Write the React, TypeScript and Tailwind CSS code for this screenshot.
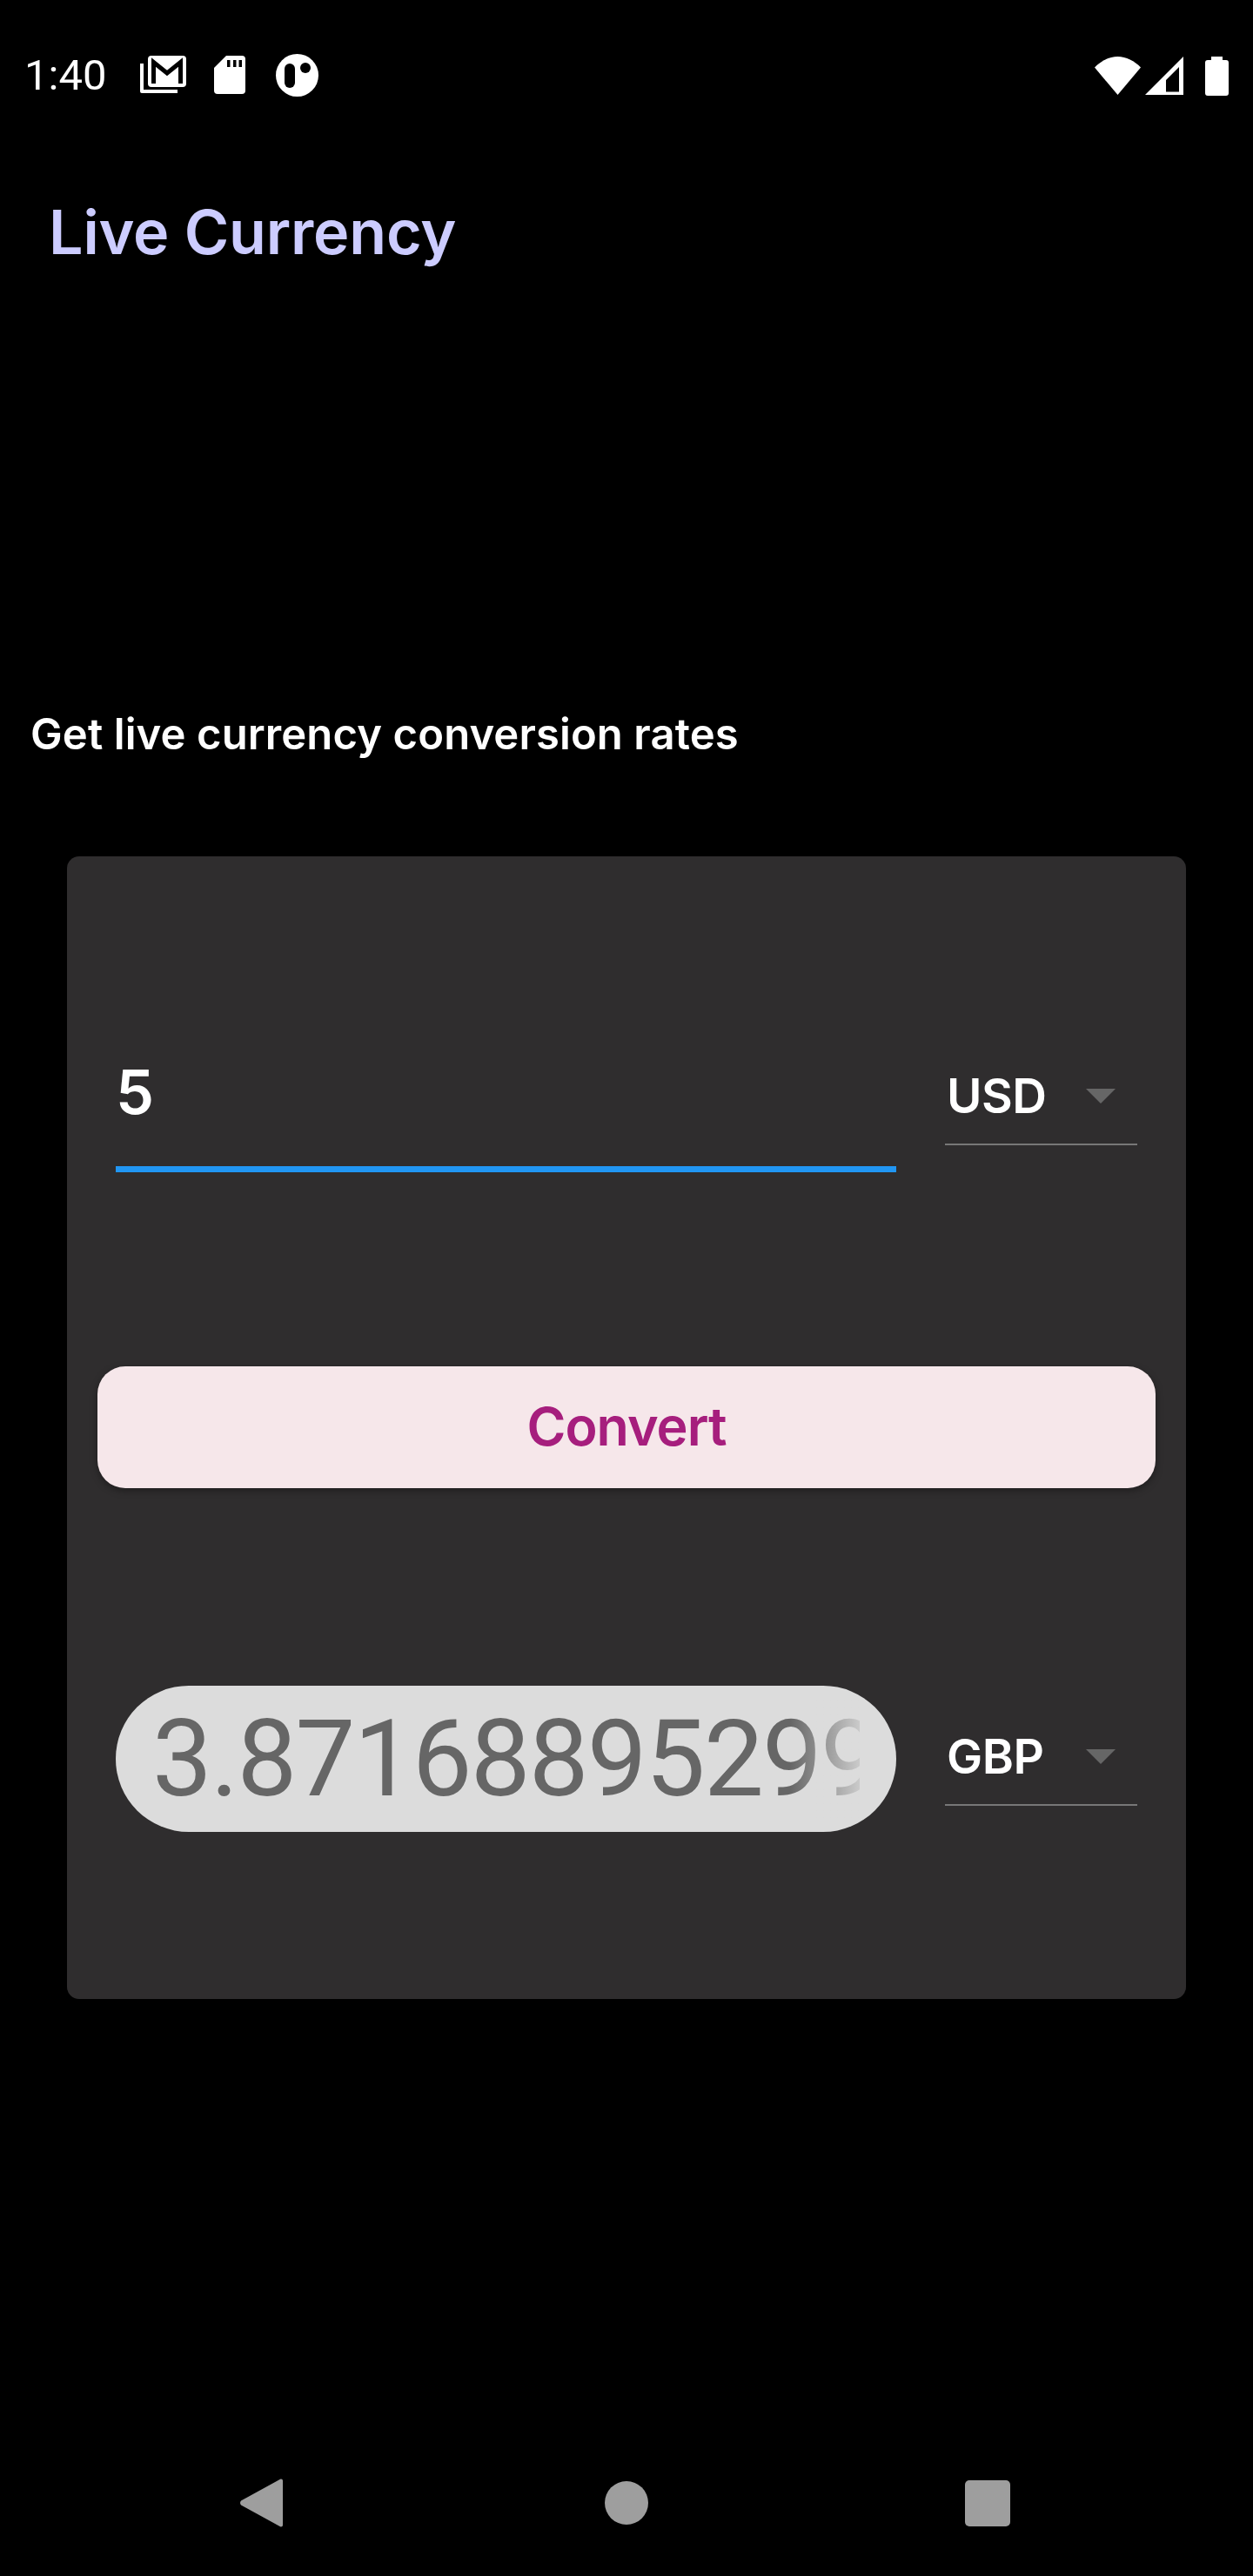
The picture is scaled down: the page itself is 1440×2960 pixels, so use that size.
export default function App() {
  const sans = "font-['Inter','Liberation_Sans',sans-serif]";
  return (
    <div className="w-[1440px] h-[2960px] bg-black flex flex-col overflow-hidden">
      <div className="h-[173px] shrink-0 flex items-center justify-between pl-[28px] pr-[28px]">
        <div className="flex items-center">
          <span className="font-['Roboto',sans-serif] text-[49px] leading-[50px] text-white w-[133px]">1:40</span>
          <svg width="205" height="50" viewBox="161 62 205 50" fill="#fff">
            <path d="M161 73h4v30h39v4h-41a2 2 0 0 1-2-2z" />
            <rect x="170" y="64" width="44" height="36" rx="4" />
            <path fill="none" stroke="#000" strokeWidth="5" d="M176.500 96V71.500L192 84l15.500-12.500V96" />
            <path d="M246 78l14-14h18a4 4 0 0 1 4 4v36a4 4 0 0 1-4 4h-28a4 4 0 0 1-4-4z" />
            <path fill="#000" d="M261 69h3.500v8h-3.500zM268 69h3.500v8h-3.500zM274.500 69h3.500v8h-3.500z" />
            <circle cx="341.500" cy="86.500" r="24.500" />
            <rect x="327" y="73" width="12" height="28" rx="6" fill="#000" />
            <circle cx="351" cy="78" r="6" fill="#000" />
          </svg>
        </div>
        <svg width="154" height="46" viewBox="1258 62 154 46" fill="#fff">
          <path d="M1258 75.500C1265 68 1275 63 1284.500 63S1304 68 1311 75.500L1284.500 107z" />
          <path clipRule="evenodd" fillRule="evenodd" d="M1316 107L1360 63V107zM1340 103.500H1355V75L1340 90z" />
          <path d="M1392 67v-4h13v4h4a3 3 0 0 1 3 3v35a3 3 0 0 1-3 3h-21a3 3 0 0 1-3-3V70a3 3 0 0 1 3-3z" />
        </svg>
      </div>
      <h1 className={`${sans} pl-[56px] text-[70px] leading-[90px] font-semibold text-[#ccccff] mt-[49px] tracking-[-0.2px]`}>Live Currency</h1>
      <p className={`${sans} pl-[35px] text-[49px] leading-[70px] font-semibold text-white mt-[497px] tracking-[0.1px]`}>Get live currency conversion rates</p>
      <div className="mt-[105px] mx-[77px] h-[1313px] bg-[#2f2d2e] rounded-[14px] flex flex-col items-stretch px-[35px]">
        <div className="mt-[226px] flex items-start gap-[56px] pl-[21px] pr-[20px]">
          <div className="w-[897px] shrink-0">
            <div className={`${sans} text-[70px] leading-[90px] font-semibold text-white`}>5</div>
            <div className="mt-[40px] h-[7px] bg-[#2196f3]" />
          </div>
          <div className="-mt-[13px]"><Picker label="USD" /></div>
        </div>
        <button className={`${sans} mt-[223px] h-[140px] rounded-[32px] bg-[#f6e7ea] text-[61px] font-semibold text-[#a61e7d] tracking-[-1px] shadow-[0_3px_8px_rgba(0,0,0,0.35)]`}>Convert</button>
        <div className="mt-[227px] flex items-start gap-[56px] pl-[21px] pr-[20px]">
          <div className="w-[897px] h-[168px] shrink-0 rounded-[84px] bg-[#dcdcdc] px-[42px] flex items-center">
            <div className="relative w-full overflow-hidden">
              <div className="font-['Roboto',sans-serif] text-[122.5px] leading-[144px] tracking-[-1.8px] text-[#666666] whitespace-nowrap">3.87168895299</div>
              <div className="absolute inset-y-0 right-0 w-[80px] bg-gradient-to-r from-[#dcdcdc00] to-[#dcdcdcd9]" />
            </div>
          </div>
          <div className="mt-[19px]"><Picker label="GBP" /></div>
        </div>
      </div>
      <div className="mt-auto h-[112px] mb-[28px] flex items-center pl-[276px]">
        <svg width="49" height="56" viewBox="0 0 49 56" fill="#9e9e9e"><path d="M47 0.500a2 2 0 0 1 2 2v51a2 2 0 0 1-2 2c-.700 0-1.300-.300-1.800-.800L1 30.500a4 4 0 0 1 0-5L45.200 1.300c.5-.5 1.100-.8 1.800-.8z" /></svg>
        <div className="ml-[370px] w-[50px] h-[50px] rounded-full bg-[#9e9e9e]" />
        <div className="ml-[364px] w-[52px] h-[53px] rounded-[5px] bg-[#9e9e9e]" />
      </div>
    </div>
  );
}

function Picker({ label }: { label: string }) {
  return (
    <div className="w-[221px] shrink-0 mt-[22px]">
      <div className="flex items-center justify-between h-[80px] pl-[2px] pr-[25px] font-['Inter',sans-serif] text-[55px] font-semibold text-white tracking-[-0.5px]">
        <span>{label}</span>
        <svg width="34" height="17" viewBox="0 0 34 17" fill="#666666"><path d="M0 0h34L17 17z" /></svg>
      </div>
      <div className="mt-[15px] h-[2px] bg-[#777777]" />
    </div>
  );
}
